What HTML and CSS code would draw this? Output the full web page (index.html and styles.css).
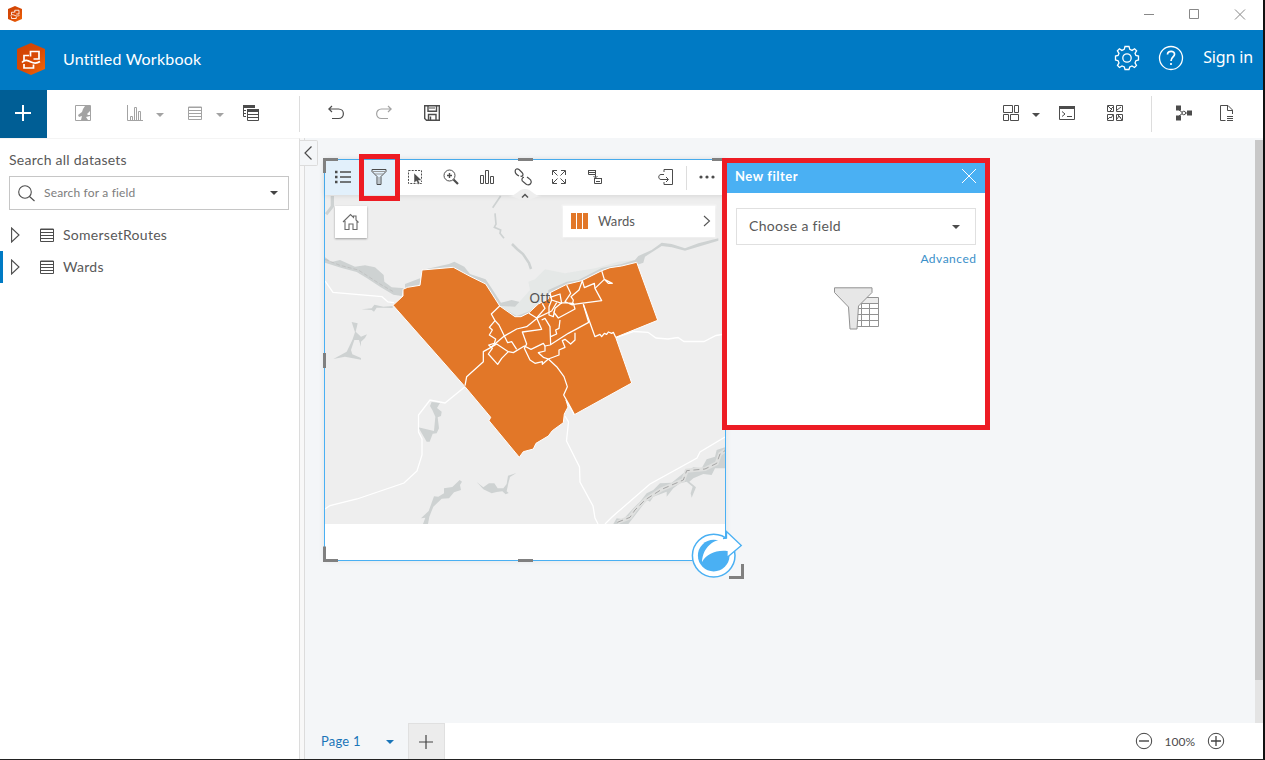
FILE: index.html
```html
<!DOCTYPE html>
<html lang="en">
<head>
<meta charset="utf-8">
<title>Untitled Workbook</title>
<link rel="stylesheet" href="styles.css">
</head>
<body>
<svg width="0" height="0" class="defs">
  <defs>
    <linearGradient id="hex" x1="0" y1="0" x2="1" y2="1"><stop offset="0" stop-color="#cf4305"/><stop offset=".55" stop-color="#d94a05"/><stop offset="1" stop-color="#f46a0a"/></linearGradient>
    <symbol id="logo" viewBox="0 0 28 32">
      <path d="M14 0 28 6V26L14 32 0 26V6z" fill="url(#hex)"/>
      <path d="M13.500 12V8.500H22V16H16.500M13.500 11V13.500M12 12.500H7V17.500M7 21V25H16.500V21.500M5 19.500C8 16 11 17.500 14 19S20 20.500 23 18.500" fill="none" stroke="#fff" stroke-width="1.700"/>
    </symbol>
    <symbol id="table" viewBox="0 0 14 14"><path d="M.5 1H13.500V13.500H.5zM.5 1.500H13.500M.5 4.500H13.500M.5 7.500H13.500M.5 10.500H13.500" fill="none" stroke="currentColor"/></symbol>
    <symbol id="caret" viewBox="0 0 8 4"><path d="M0 0H8L4 4z" fill="currentColor"/></symbol>
  </defs>
</svg>
<div class="app">
  <div class="titlebar">
    <svg class="mini-logo"><use href="#logo"/></svg>
    <svg class="win" width="104" height="14" viewBox="0 0 104 14" fill="none" stroke="#888"><path d="M0 7.500H10M45.500 2.500H54.500V11.500H45.500zM91 2.500 101 12.500M101 2.500 91 12.500"/></svg>
  </div>
  <header class="header">
    <svg class="logo"><use href="#logo"/></svg>
    <span class="title">Untitled Workbook</span>
    <svg class="gear" width="26" height="26" viewBox="-13 -13 26 26" fill="none" stroke="#fff" stroke-width="1.300"><path d="M-2-11.500H2L2.800-8.600 5.100-7.600 7.600-9.200 9.600-7.200 8-4.700 8.900-2.500 11.500-2V2L8.900 2.700 8 4.900 9.500 7.500 7.500 9.500 5 8 2.800 8.900 2 11.500H-2L-2.700 8.900-5 8-7.500 9.500-9.500 7.500-8 4.900-8.900 2.700-11.500 2V-2L-8.900-2.500-8-4.700-9.600-7.200-7.600-9.200-5.100-7.600-2.800-8.600z"/><circle r="4.200"/></svg>
    <svg class="help" width="26" height="26" viewBox="-13 -13 26 26" fill="none" stroke="#fff" stroke-width="1.300"><circle r="11.500"/><path stroke-width="1.700" d="M-3.500-3.500C-3.500-8 4-7.500 3.500-3.500 3.300-1 0-1 0 3M0 5V7"/></svg>
    <span class="signin">Sign in</span>
  </header>
  <div class="toolbar">
    <div class="add"><svg width="16" height="16" viewBox="0 0 16 16" stroke="#fff" stroke-width="2"><path d="M8 0V16M0 8H16"/></svg></div>
    <div class="tools left">
      <span class="tb off g20"><svg width="16" height="16" viewBox="0 0 16 16"><path d="M.5.500H15.500V15.500H.5z" fill="none" stroke="currentColor"/><path d="M10 1H15V6L12 9 13 10 15 10V11L11 12 13 15H6L7 11 4 12 3 10 7 7 8 4z" fill="currentColor"/></svg></span>
      <span class="tb off g20"><svg width="16" height="16" viewBox="0 0 16 16" fill="none" stroke="currentColor"><path d="M.5 0V15.500H16M3.500 15V11.500H5.500V15M7.500 15V2.500H9.500V15M11.500 15V6.500H13.500V15"/></svg></span>
      <span class="tc off g1"><svg width="8" height="4"><use href="#caret"/></svg></span>
      <span class="tb off g11"><svg width="14" height="14"><use href="#table"/></svg></span>
      <span class="tc off g1"><svg width="8" height="4"><use href="#caret"/></svg></span>
      <span class="tb g7"><svg width="16" height="16" viewBox="0 0 16 16" fill="none" stroke="currentColor"><path d="M0 1.500H12" stroke-width="3"/><path d="M.5 0V11.500H3M1 5.500H3M1 8.500H3M4.500 5V15.500H15.500V5M4 9.500H16M4 12.500H16"/><path d="M4 5.500H16" stroke-width="3"/></svg></span>
      <i class="rule g32"></i>
      <span class="tb g20"><svg width="16" height="16" viewBox="0 0 16 16" fill="none" stroke="currentColor" stroke-width="1.200"><path d="M4 1 .8 4 4 7M1 4H10.500C17 4 17 13.500 10.500 13.500H4"/></svg></span>
      <span class="tb off g16"><svg width="16" height="16" viewBox="0 0 16 16" fill="none" stroke="currentColor" stroke-width="1.200"><path d="M12 1 15.200 4 12 7M15 4H5.500C-1 4-1 13.500 5.500 13.500H12"/></svg></span>
      <span class="tb g16"><svg width="16" height="16" viewBox="0 0 16 16" fill="none" stroke="currentColor" stroke-width="1.400"><path d="M.7.700H15.300V15.300H2.500L.7 13.500zM4 1V6.300H12.500V1M4.500 15V9.500H12V15M6.500 11.500V15"/><path d="M5 3H11" stroke-width="1"/></svg></span>
    </div>
    <div class="tools right">
      <span class="tb"><svg width="16" height="16" viewBox="0 0 16 16" fill="none" stroke="currentColor"><path d="M.5.500H9.500V7.500H.5zM11.500.500H15.500V7.500H11.500zM.5 9.500H5.500V15.500H.5zM7.500 9.500H15.500V15.500H7.500z"/></svg></span>
      <span class="tc g1"><svg width="8" height="4"><use href="#caret"/></svg></span>
      <span class="tb g7"><svg width="16" height="14" viewBox="0 0 16 14" fill="none" stroke="currentColor"><path d="M.5 0V13.500H15.500V0M3 5.500 6 8 3 10.500M8 10.500H13"/><path d="M0 1.500H16" stroke-width="3"/></svg></span>
      <span class="tb g16"><svg width="16" height="16" viewBox="0 0 16 16" fill="none" stroke="currentColor"><path d="M.5.500H6.500V6.500H.5zM9.500.500H15.500V6.500H9.500zM.5 9.500H6.500V15.500H.5zM9.500 9.500H15.500V15.500H9.500zM1 1 4 4 6 2M3 6 5 4M10 5 14 2M1 14 3 12 4 13 6 10M10 14 12 11 15 15M11 10 14 13"/></svg></span>
      <i class="rule g20"></i>
      <span class="tb g16"><svg width="16" height="16" viewBox="0 0 16 16"><path d="M0 .500H5V5.500H0zM0 10.500H5V15.500H0zM11 5.500H16V10.500H11z" fill="currentColor"/><path d="M3 5 7 8 3 11M9.500 8H11" fill="none" stroke="currentColor"/><circle cx="7.800" cy="8" r="1.800" fill="#fff" stroke="currentColor"/></svg></span>
      <span class="tb g11"><svg width="14" height="16" viewBox="0 0 14 16" fill="none" stroke="currentColor"><path d="M5.500 15.500H.5V.500H8L12.500 5V9M7.500 1V5.500H12.500M7 11.500H13M7 13.500H13M7 15.500H13"/></svg></span>
    </div>
  </div>
  <div class="body">
    <aside class="side">
      <div class="side-label">Search all datasets</div>
      <div class="search">
        <svg width="17" height="17" viewBox="0 0 17 17" fill="none" stroke="#4c4c4c" stroke-width="1.100"><circle cx="7" cy="7" r="6.300"/><path d="M11.500 11.500 16.500 16"/></svg>
        <span>Search for a field</span>
        <svg class="caret" width="8" height="4"><use href="#caret"/></svg>
      </div>
      <div class="ds"><svg class="exp" width="10" height="16" viewBox="0 0 10 16"><path d="M.6 1V15L8 8z" fill="none" stroke="currentColor" stroke-width="1.100"/></svg><svg width="14" height="14"><use href="#table"/></svg><span>SomersetRoutes</span></div>
      <div class="ds sel"><svg class="exp" width="10" height="16" viewBox="0 0 10 16"><path d="M.6 1V15L8 8z" fill="none" stroke="currentColor" stroke-width="1.100"/></svg><svg width="14" height="14"><use href="#table"/></svg><span>Wards</span></div>
    </aside>
    <div class="gutter"></div>
    <div class="collapse"><svg width="8" height="14" viewBox="0 0 8 14" fill="none" stroke="#4c4c4c" stroke-width="1.200"><path d="M7.500.500 1 7 7.500 13.500"/></svg></div>
    <main class="main">
      <div class="canvas-row">
        <div class="canvas">
          <section class="card">
            <div class="card-tools">
              <span class="ct on"><svg width="16" height="14" viewBox="0 0 16 14" fill="none" stroke="currentColor" stroke-width="1.600"><path d="M5 2H16M5 7H16M5 12H16"/><path d="M0 2H2.500M0 7H2.500M0 12H2.500" stroke-width="2.500"/></svg></span>
              <span class="ct on"><svg width="16" height="16" viewBox="0 0 16 16" fill="none" stroke="currentColor"><path d="M1 .500H15V2.500L10 7.500V15.500H6V7.500L1 2.500z"/><path d="M1.500 2.500H14.500M4 5H12M8 8V15" stroke="#999"/></svg></span>
              <span class="ct"><svg width="16" height="16" viewBox="0 0 16 16"><path d="M1.500 1.500H14.500V14.500H1.500z" fill="none" stroke="currentColor" stroke-dasharray="2 1.200"/><path d="M7 4V14L9.500 12 11 15.500 13 14.500 11.500 11.500H15z" fill="currentColor" stroke="#fff" stroke-width=".5"/></svg></span>
              <span class="ct"><svg width="16" height="16" viewBox="0 0 16 16" fill="none" stroke="currentColor"><circle cx="6.500" cy="6.500" r="5.500"/><path d="M4 6.500H9M6.500 4V9" stroke-width="1.400"/><path d="M10.500 10.500 15 15" stroke-width="2.200"/></svg></span>
              <span class="ct"><svg width="14" height="14" viewBox="0 0 14 14" fill="none" stroke="currentColor"><path d="M.5 5.500H3.500V13.500H.5zM5.500 .500H8.500V13.500H5.500zM10.500 6.500H13.500V13.500H10.500z"/></svg></span>
              <span class="ct"><svg width="18" height="18" viewBox="0 0 18 18" fill="none" stroke="currentColor" stroke-width="1.200"><path d="M5 8C-1 5 1-1 5 1.500L8 4.500C10 6.500 8.500 9 6.500 8M10 9.500C7.500 9 7.500 13 9 13.500L12.500 16.500C17 18 19 13 15 10.500L13 9"/></svg></span>
              <span class="ct"><svg width="14" height="14" viewBox="0 0 14 14" fill="none" stroke="currentColor"><path d="M5 .500H.5V5M9 .500H13.500V5M.5 9V13.500H5M13.500 9V13.500H9M1 1 5.500 5.500M13 1 8.500 5.500M1 13 5.500 8.500M13 13 8.500 8.500"/></svg></span>
              <span class="ct"><svg width="16" height="16" viewBox="0 0 16 16" fill="none" stroke="currentColor"><path d="M1 1.500H9M1.500 2V5.500H8.500V2M1 3.500H9M7 9.500H15M7.500 10V14.500H14.500V10M9 12.500H13"/><path d="M8.500 5.500V8.500M6.500 7 8.500 9 10.500 7"/></svg></span>
              <span class="ct export"><svg width="16" height="16" viewBox="0 0 16 16" fill="none" stroke="currentColor"><path d="M6 3V.500H14.500V15.500H6V13M6 5.500H3C0 5.500 0 10.500 3 10.500H10M8 8 10.500 10.500 8 13"/></svg></span>
              <i class="rule small"></i>
              <span class="ct"><svg width="16" height="4" viewBox="0 0 16 4" fill="currentColor"><circle cx="2" cy="2" r="1.600"/><circle cx="8" cy="2" r="1.600"/><circle cx="14" cy="2" r="1.600"/></svg></span>
            </div>
            <div class="map">
              <svg class="geo" width="400" height="329" viewBox="325 195 400 329">
                <g transform="translate(300 90) scale(.33333)" fill="#ced2d2"><path d="M75 370 92 348V318H102V350L82 376z"/><path d="M578 353 602 318M585 370 588 402 583 412 602 420 600 430 612 445" fill="none" stroke="#ced2d2" stroke-width="5"/></g>
                <path d="M512 244 517 249 523 254 529 263 531 269" fill="none" stroke="#ced2d2" stroke-width="2.500"/>
                <g transform="translate(325 240) scale(.33333)" fill="#ced2d2">
                  <path d="M0 52 20 66 45 60 90 80 120 76 150 82 176 105 178 125 200 142 240 145V132L285 115V136L234 152 230 168 205 164 165 140 125 114 95 96 50 84 0 68z"/>
                  <path d="M291 90 372 72 388 65 418 80 435 102 482 118 500 145 528 188 560 180 600 190V238H572L524 202 480 132 430 110 385 84z"/>
                  <path d="M80 246 98 250 92 275 108 290 126 283 120 294 108 305V320L102 300 88 300 78 330 82 343 108 354V359L60 350 25 357 65 335 82 300 90 277z"/>
                  <path d="M110 208 140 205 148 194 175 200 203 198V204L175 203 155 203 147 215 140 210z"/>
                  <path d="M0 58 45 76 100 90 165 132 205 155" fill="none" stroke="#b9baba" stroke-width="2" stroke-dasharray="12 6"/>
                </g>
                <g transform="translate(485 240) scale(.33333)">
                  <path d="M90 200 135 150 130 125 150 118 180 88 240 100 330 85 400 65 450 60 455 72 300 124 195 165 132 220 90 232 44 198z" fill="#e5e8e7"/>
                  <path d="M44 198 95 228 130 215 188 175 190 150 245 125 280 120 350 84 410 72 450 60 460 48 500 30 530 8 560 12 600 25 640 10 700-5V2L640 20 600 32 560 22 530 18 480 50 475 68 455 75 290 128 130 230 90 234z" fill="#ced2d2"/>
                </g>
                <g transform="translate(325 380) scale(.33333)" fill="#ced2d2">
                  <path d="M320 66 345 69 336 84 350 95 348 108 338 112 342 145 335 160 323 161 314 185H305L280 142 327 153 331 110 322 90 315 78zM288 415 311 393 327 349 340 350 357 340V325L382 321 404 300 411 305 405 315 408 330 387 337 372 355 350 356 325 380 313 410 309 432H294L301 413zM455 306 475 322 492 310H508L518 325H535L545 312 549 287 574 279 555 291 550 310 545 334 551 339 542 343 532 334 515 336 500 340 475 328z"/>
                </g>
                <g transform="translate(520 400) scale(.33333)">
                  <path d="M280 372 290 355 310 358 340 325 360 305 380 280 400 270 420 250 455 248 490 220 520 202 545 205 560 178 585 170 590 150 615 142V205L585 205 575 225 550 222 520 235 508 245 528 262 515 293 512 280 518 260 500 245 480 250 460 265 440 290V275L400 290 390 305 380 300 350 340 325 372z" fill="#ced2d2"/>
                  <path d="M292 367 330 352 345 330 375 300 425 268 490 240 500 212 555 207 590 190 600 162 615 152" fill="none" stroke="#dfe0df" stroke-width="12"/>
                  <path d="M292 367 330 352 345 330 375 300 425 268 490 240 500 212 555 207 590 190 600 162 615 152" fill="none" stroke="#999" stroke-width="2.500" stroke-dasharray="18 11"/>
                </g>
                <g fill="none" stroke="#fff" stroke-width="1.300">
                  <path d="M325 281 333 292.300 382 296.700 388 302 394 302.700M465 386.700 445 403 430 400 418.500 415V432L422 439V455L417 471 404 483 357 499 330 505.500 325 509"/>
                  <path d="M616 337.300 634 331.500 648 332.300 656 338 668 339 678 337.500 684 341.500H704L716 335.500 725 334M565 416 568.500 422 566.500 441 579.500 467 580 482 593 506 595 518 598 524M605 524 612 517 650 484 697 458 700 452 725 437"/>
                </g>
                <path d="M393 305.300 403 296 403 289.300 407.700 287.300 420 285.300 422 270 453.300 267.300 470 276.300 485.700 284 499.700 306 515 316.700 521 316.700 529 312.700 538.300 304 548.300 299 550 292.700 566.700 284.300 581.700 280.700 601.700 270.700 610 267.700 621.700 266 636.700 262.300 657.700 320.300 615.700 337.300 631.700 383 574.300 414.700 566 400 568 407 564.300 414 563.300 422.700 552.300 430.700 548.300 436 536 443.300 533.300 449 523.300 451.700 519.300 457.300 489 420.700 490.700 417.300 465 386.700z" fill="#e27728" stroke="#fff"/>
                <text x="529.300" y="302.500" class="city">Ott</text>
                <g transform="translate(485 240) scale(.33333)" fill="none" stroke="#fff" stroke-width="3.800" stroke-linejoin="round">
                  <path d="M44 198 19 222 30 242 13 262 22 270 13 285 32 297 28 310 11 315 22 325 10 342 38 373 50 355 70 335 35 312 18 322-5 335V365L-55 410-60 437"/>
                  <path d="M30 242 42 255 58 288 68 308 80 305 95 328M18 322 55 290 95 267 125 260 160 232 200 213 215 188"/>
                  <path d="M70 335 85 338 118 318 138 328 175 310 180 318 195 315 250 280 311 247 295 193"/>
                  <path d="M132 220 155 234 170 268 112 276 125 312 118 325 135 360 150 370 172 365V373L190 357 175 352 160 338 180 333V318M155 234 180 205 172 190M170 240 180 235 195 260 197 315"/>
                  <path d="M190 357 222 345V330L240 322 232 302 240 298 257 312 270 300V278M190 357 215 380 237 410 247 440 236 465 250 490 268 524"/>
                  <path d="M195 158 200 180 230 190 225 162 195 172M200 180 192 200V225L205 230 210 205 230 188 265 190 270 207 220 234 205 215M245 135 257 160 240 185 262 195 265 180 258 170 282 150 292 122 298 143 328 130 330 145 350 182 265 193M225 240 222 265 212 270 215 282 197 290"/>
                  <path d="M350 92 358 118 382 130 370 130 358 118 330 145M295 193 330 290 345 283 350 290 358 280 365 283 370 276 380 280 385 277 392 292"/>
                </g>
              </svg>
              <div class="home"><svg width="18" height="18" viewBox="0 0 18 18" fill="none" stroke="#6a6a6a" stroke-width="1.100"><path d="M1 9 8.500 1.500 11.500 4.500V3H14V7L16.500 9.500M3 8V16.500H7V11H11V16.500H15V8"/></svg></div>
              <div class="legend"><i></i><i></i><i></i><span>Wards</span><svg width="8" height="12" viewBox="0 0 8 12" fill="none" stroke="#555" stroke-width="1.100"><path d="M1 1 6.500 6 1 11"/></svg></div>
            </div>
            <svg class="notch" width="34" height="13" viewBox="0 0 34 13"><path d="M0 8C9 8 10 1 17 1S25 8 34 8C27 8 24 12.500 17 12.500S7 8 0 8z" fill="#eee"/><path d="M14 9.500 17 6.500 20 9.500" fill="none" stroke="#555" stroke-width="1.500"/></svg>
            <svg class="handles" width="425" height="425" viewBox="322 157 425 425" fill="none" stroke="#808080" stroke-width="3"><path d="M338 159.500H324.500V173M518 159.500H533M712 159.500H724M324.500 353V368M324.500 546.500V560.500H338M518 560.500H533M742.500 564V577.500H729"/></svg>
            <svg class="flip" width="52" height="50" viewBox="690 530 52 50"><circle cx="713.700" cy="555.600" r="21.300" fill="#fff" stroke="#4ab0f3" stroke-width="1.500"/><circle cx="713.700" cy="555.600" r="15.800" fill="#4ab0f3"/><path d="M702 562C703 547 713 539 726.500 539V532L741.300 545.500 727 557.500V551C715 550 707 554 702 562z" fill="#fff"/><path d="M723 538.500 726.500 538V531.500L741.300 545.500 727 557.500V551" fill="none" stroke="#4ab0f3" stroke-width="1.300"/></svg>
            <div class="mark"></div>
          </section>
          <section class="filter">
            <div class="f-head"><span>New filter</span><svg width="14" height="14" viewBox="0 0 14 14" stroke="#fff"><path d="M0 0 14 14M14 0 0 14"/></svg></div>
            <div class="f-body">
              <div class="select"><span>Choose a field</span><svg width="8" height="4"><use href="#caret"/></svg></div>
              <span class="adv">Advanced</span>
              <svg class="funnel" width="46" height="44" viewBox="0 0 46 44" fill="#fff" stroke="#929292"><path d="M22.500 10.500H44.500V39.500H22.500z"/><path d="M23 11H44V16H23z" fill="#ececec" stroke="none"/><path d="M22 16.500H44M22 21.500H44M22 27.500H44M22 33.500H44M27.500 16V39M35.500 16V39"/><path d="M.5.800H38V5.500L24.500 19 23 42H16L14.500 20 .5 5.500z" fill="#e7e7e7"/></svg>
            </div>
          </section>
        </div>
        <div class="scroll"><div></div></div>
      </div>
      <footer class="tabs">
        <div class="page"><span>Page 1</span><svg width="8" height="4"><use href="#caret"/></svg></div>
        <div class="plus"><svg width="14" height="14" viewBox="0 0 14 14" stroke="#444" stroke-width="1.200"><path d="M7 0V14M0 7H14"/></svg></div>
        <div class="zoom">
          <svg width="18" height="18" viewBox="0 0 18 18" fill="none" stroke="#444"><circle cx="9" cy="9" r="7.700"/><path d="M4 9H14" stroke-width="1.400"/></svg>
          <span>100%</span>
          <svg width="18" height="18" viewBox="0 0 18 18" fill="none" stroke="#444"><circle cx="9" cy="9" r="7.700"/><path d="M4 9H14M9 4V14" stroke-width="1.300"/></svg>
        </div>
      </footer>
    </main>
  </div>
</div>
</body>
</html>
```
FILE: styles.css
```css
* { box-sizing: border-box; }
body { margin: 0; font-family: Lato, sans-serif; color: #4c4c4c; font-size: 14px; overflow: hidden; }
svg { display: block; flex: none; }
.defs { position: absolute; }
span { white-space: nowrap; }
.app { width: 1265px; height: 760px; background: #fff; border-right: 2px solid #111; border-bottom: 1px solid #222; display: flex; flex-direction: column; }
.titlebar { height: 30px; flex: none; display: flex; align-items: flex-start; justify-content: space-between; padding: 6px 15px 0 8px; }
.mini-logo { width: 14px; height: 16px; }
.win { margin-top: 1px; }
.header { height: 60px; flex: none; background: #007ac4; color: #fff; display: flex; align-items: center; padding: 0 10px 0 17px; }
.logo { width: 28px; height: 32px; margin-bottom: 2px; }
.title { margin: -3px 0 0 18px; font-size: 16px; letter-spacing: .22px; }
.gear { margin: -4px 18px 0 auto; }
.help { margin-top: -4px; }
.signin { margin: -7px 0 0 19px; font: 16px "Noto Sans", sans-serif; letter-spacing: -.15px; }
.toolbar { height: 48px; flex: none; display: flex; }
.add { width: 47px; background: #005e95; display: flex; align-items: center; justify-content: center; padding: 0 1px 2px 0; }
.tools { display: flex; align-items: center; padding-bottom: 2px; }
.right { margin-left: auto; padding-right: 20px; }
.tb, .tc { display: flex; justify-content: center; flex: none; width: 32px; }
.tc { width: 16px; padding-top: 3px; }
.off { color: #a3a3a3; }
.rule { width: 1px; height: 36px; background: #ddd; margin-top: 1px; }
.g1 { margin-left: 1px; }
.g7 { margin-left: 7px; }
.g11 { margin-left: 11px; }
.g16 { margin-left: 16px; }
.g20 { margin-left: 20px; }
.g32 { margin-left: 32px; }
.body { flex: 1; display: flex; position: relative; min-height: 0; }
.side { width: 300px; border-right: 1px solid #dcdcdc; border-top: 1px solid #f4f4f4; padding-top: 12px; }
.side-label { line-height: 18px; padding-left: 9px; letter-spacing: .25px; color: #595959; }
.search { height: 34px; width: 280px; margin: 7px 0 9px 9px; border: 1px solid #c6c6c6; display: flex; align-items: center; padding: 0 10px 0 8px; font-size: 12px; color: #7d7d7d; }
.search span { margin: -2px 0 0 9px; letter-spacing: .17px; }
.search .caret { margin-left: auto; color: #444; }
.ds { height: 32px; display: flex; align-items: center; padding-left: 11px; letter-spacing: .27px; }
.ds .exp { margin-right: 19px; }
.ds span { margin: -2px 0 0 9px; color: #595959; }
.sel { border-left: 3px solid #007ac4; padding-left: 8px; }
.gutter { width: 5px; background: #f8f8f8; border-right: 1px solid #dcdcdc; }
.collapse { position: absolute; left: 300px; top: 2px; width: 18px; height: 26px; border: 1px solid #dcdcdc; border-left: 0; border-radius: 0 2px 2px 0; background: #f4f6f8; padding: 5px 0 0 4px; }
.main { flex: 1; display: flex; flex-direction: column; min-width: 0; }
.canvas-row { height: 585px; flex: none; display: flex; background: #f4f6f8; }
.canvas { flex: 1; position: relative; }
.scroll { width: 8px; background: #e4e4e4; margin-top: 2px; }
.scroll div { height: 540px; background: #c8c8c8; }
.card { position: absolute; left: 19px; top: 21px; width: 402px; height: 402px; border: 1px solid #4ab0f3; background: #fff; box-shadow: 0 0 6px rgba(0,0,0,.08); }
.card-tools { height: 35px; display: flex; align-items: center; background: #fff; position: relative; box-shadow: 0 1px 5px rgba(0,0,0,.1); z-index: 1; }
.ct { width: 36px; height: 35px; display: flex; align-items: center; justify-content: center; flex: none; padding-bottom: 1px; }
.on { background: #e2f0fb; }
.export { margin-left: auto; }
.small { height: 24px; margin: 0 2px; }
.map { height: 329px; background: #eee; position: relative; overflow: hidden; }
.city { font: 14px "Noto Sans", sans-serif; fill: #555; }
.home { position: absolute; left: 10px; top: 11px; width: 32px; height: 32px; background: #fff; box-shadow: 0 1px 2px rgba(0,0,0,.35); padding: 7px; }
.legend { position: absolute; left: 238px; top: 11px; width: 152px; height: 31px; background: #fff; box-shadow: 0 0 2px 1px rgba(255,255,255,.8), 0 1px 3px rgba(0,0,0,.12); display: flex; align-items: center; padding: 0 4px 2px 8px; font-size: 13px; color: #595959; }
.legend i { width: 5px; height: 16px; background: #e27728; margin: 1px 1px 0 0; }
.legend span { margin-left: 9px; letter-spacing: .1px; }
.legend svg { margin-left: auto; }
.notch { position: absolute; left: 183px; top: 28px; z-index: 2; }
.handles { position: absolute; left: -3px; top: -3px; z-index: 2; }
.flip { position: absolute; left: 365px; top: 370px; z-index: 3; overflow: visible; }
.mark { position: absolute; left: 34px; top: -6px; width: 41px; height: 47px; border: 5px solid #ed1c24; z-index: 4; }
.filter { position: absolute; left: 417px; top: 20px; width: 268px; height: 272px; border: 5px solid #ed1c24; background: #fff; z-index: 5; }
.f-head { height: 30px; background: #4ab0f3; color: #fff; display: flex; align-items: center; justify-content: space-between; padding: 0 9px 4px 8px; font-weight: bold; font-size: 13px; letter-spacing: .55px; }
.f-head span { margin-top: -1px; }
.f-body { display: flex; flex-direction: column; padding: 15px 9px; }
.select { height: 37px; border: 1px solid #e0e0e0; display: flex; align-items: center; justify-content: space-between; padding: 0 15px 0 12px; letter-spacing: .33px; }
.select span { margin-top: -2px; color: #595959; }
.adv { align-self: flex-end; font-size: 12px; line-height: 16px; margin-top: 6px; color: #3a8fc9; letter-spacing: .5px; margin-right: -.5px; }
.funnel { margin: 20px 0 0 98px; }
.tabs { height: 36px; display: flex; background: #fff; }
.page { width: 103px; background: #f4f6f8; display: flex; align-items: center; justify-content: space-between; padding: 2px 14px 0 16px; font-size: 13px; color: #1a75b8; letter-spacing: .2px; }
.page span { margin-top: -2px; }
.plus { width: 37px; background: #ececec; border: 1px solid #e0e0e0; border-bottom: 0; display: flex; align-items: center; justify-content: center; padding-right: 1px; }
.zoom { margin-left: auto; display: flex; align-items: center; padding-right: 38px; padding-bottom: 1px; font-size: 12px; }
.zoom span { margin: 2px 12px 0 12px; }
```
